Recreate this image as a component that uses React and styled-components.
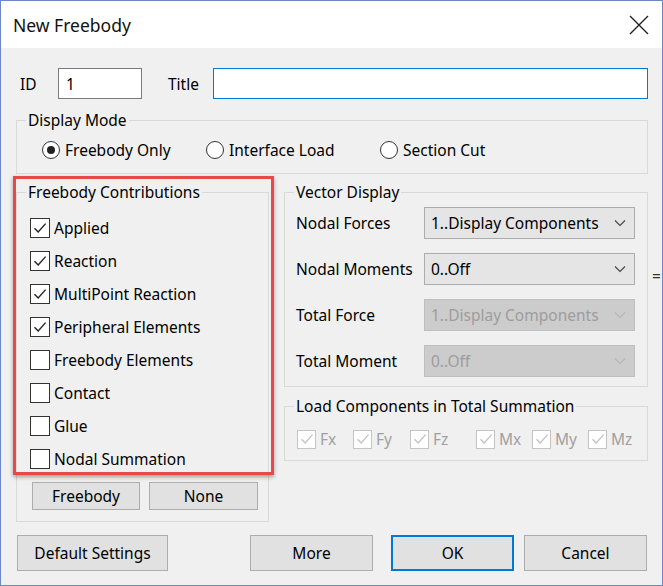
import React from "react";
import styled, { createGlobalStyle } from "styled-components";

const Global = createGlobalStyle`
  html, body { margin: 0; padding: 0; background: #ffffff; }
  body { font-family: "Noto Sans", "Open Sans", sans-serif; }
  * { box-sizing: border-box; }
`;

const Window = styled.div`
  width: 663px;
  height: 586px;
  border: 1px solid #6b87c9;
  background: #f0f0f0;
  display: flex;
  flex-direction: column;
  font-size: 15.5px;
  color: #000;
  position: relative;
`;

const TitleBar = styled.div`
  height: 47px;
  background: #ffffff;
  display: flex;
  align-items: center;
  justify-content: space-between;
  padding: 0 13px 0 12px;
  font-size: 17.5px;
  color: #111;
`;

const Body = styled.div`
  flex: 1;
  padding: 20px 14px 0 15px;
  display: flex;
  flex-direction: column;
`;

const IdRow = styled.div`
  display: flex;
  align-items: center;
  height: 31px;
`;

const Label = styled.span`
  width: ${(p) => p.$w || "auto"};
  padding-left: ${(p) => p.$pl || 0};
  flex-shrink: 0;
  white-space: nowrap;
  color: ${(p) => (p.$disabled ? "#a0a0a0" : "#000")};
`;

const TextBox = styled.div`
  height: 31px;
  width: ${(p) => p.$w || "auto"};
  flex: ${(p) => (p.$grow ? 1 : "none")};
  background: #fff;
  border: 1px solid ${(p) => (p.$focus ? "#0078d7" : "#7a7a7a")};
  display: flex;
  align-items: center;
  padding-left: 7px;
`;

const Group = styled.fieldset`
  margin: ${(p) => p.$m || 0};
  padding: 0;
  border: 1px solid #d9d9d9;
  min-width: 0;
  width: ${(p) => p.$w || "auto"};
`;

const Legend = styled.legend`
  margin-left: 9px;
  padding: 0 2px;
  line-height: 20px;
`;

const GroupBody = styled.div`
  padding: ${(p) => p.$pad};
  display: flex;
  flex-direction: ${(p) => p.$dir || "column"};
`;

const RadioItem = styled.label`
  display: flex;
  align-items: center;
  height: 24px;
  width: ${(p) => p.$w || "auto"};
  gap: 5px;
`;

const RadioCircle = styled.span`
  width: 18px;
  height: 18px;
  border-radius: 50%;
  border: 1px solid #333;
  background: #fff;
  display: flex;
  align-items: center;
  justify-content: center;
  &::after {
    content: "";
    width: 8px;
    height: 8px;
    border-radius: 50%;
    background: ${(p) => (p.$on ? "#222" : "transparent")};
  }
`;

const CheckRow = styled.label`
  display: flex;
  align-items: center;
  height: ${(p) => p.$h || "33px"};
  width: ${(p) => p.$w || "auto"};
  gap: 4px;
  color: ${(p) => (p.$disabled ? "#a0a0a0" : "#000")};
`;

const Box = styled.span`
  width: ${(p) => p.$size || "20px"};
  height: ${(p) => p.$size || "20px"};
  border: 1px solid ${(p) => (p.$disabled ? "#c4c4c4" : "#333")};
  background: #fff;
  display: flex;
  align-items: center;
  justify-content: center;
  flex-shrink: 0;
`;

const Columns = styled.div`
  display: flex;
  gap: 15px;
  margin-top: 8px;
`;

const RightCol = styled.div`
  flex: 1;
  display: flex;
  flex-direction: column;
`;

const SmallButtons = styled.div`
  display: flex;
  gap: 9px;
  margin: 7px 0 0 2px;
`;

const Button = styled.button`
  font-family: inherit;
  font-size: 15.5px;
  color: #000;
  height: ${(p) => p.$h || "36px"};
  width: ${(p) => p.$w};
  margin-left: ${(p) => p.$ml || 0};
  background: #e1e1e1;
  border: ${(p) => (p.$default ? "2px solid #0078d7" : "1px solid #adadad")};
  padding: 0;
  flex-shrink: 0;
`;

const FieldRow = styled.div`
  display: flex;
  align-items: center;
  height: 31px;
  margin-top: ${(p) => p.$mt || 0};
`;

const Select = styled.div`
  width: 211px;
  height: 32px;
  background: ${(p) => (p.$disabled ? "#cccccc" : "#e5e5e5")};
  border: 1px solid ${(p) => (p.$disabled ? "#bfbfbf" : "#acacac")};
  color: ${(p) => (p.$disabled ? "#9d9d9d" : "#000")};
  display: flex;
  align-items: center;
  justify-content: space-between;
  padding: 0 8px 0 6px;
`;

const ComponentRow = styled.div`
  display: flex;
  align-items: center;
  height: 22px;
`;

const Footer = styled.div`
  display: flex;
  margin-top: 13px;
  padding-right: 1px;
`;

const Spacer = styled.div`
  flex: 1;
`;

const Highlight = styled.div`
  position: absolute;
  left: 12px;
  top: 175px;
  width: 261px;
  height: 299px;
  border: 3px solid #e84848;
  box-shadow: 0 2px 4px rgba(0, 0, 0, 0.35);
  pointer-events: none;
`;

const Stray = styled.span`
  position: absolute;
  left: 651px;
  top: 264px;
  color: #333;
`;

const Check = ({ disabled }) => (
  <svg width="16" height="16" viewBox="0 0 16 16">
    <path
      d="M2.5 8.2 L6.2 12 L13.6 3.6"
      fill="none"
      stroke={disabled ? "#c4c4c4" : "#222"}
      strokeWidth="1.4"
    />
  </svg>
);

const Chevron = ({ disabled }) => (
  <svg width="12" height="8" viewBox="0 0 12 8">
    <path
      d="M1 1.5 L6 6.5 L11 1.5"
      fill="none"
      stroke={disabled ? "#b5b5b5" : "#444"}
      strokeWidth="1.1"
    />
  </svg>
);

const CloseIcon = () => (
  <svg width="20" height="20" viewBox="0 0 20 20">
    <path d="M1 1 L19 19 M19 1 L1 19" stroke="#222" strokeWidth="1.4" />
  </svg>
);

const contributions = [
  ["Applied", true],
  ["Reaction", true],
  ["MultiPoint Reaction", true],
  ["Peripheral Elements", true],
  ["Freebody Elements", false],
  ["Contact", false],
  ["Glue", false],
  ["Nodal Summation", false],
];

const vectors = [
  ["Nodal Forces", "1..Display Components", false],
  ["Nodal Moments", "0..Off", false],
  ["Total Force", "1..Display Components", true],
  ["Total Moment", "0..Off", true],
];

const components = [
  ["Fx", "56px"],
  ["Fy", "57px"],
  ["Fz", "66px"],
  ["Mx", "56px"],
  ["My", "56px"],
  ["Mz", "auto"],
];

export default function App() {
  return (
    <>
      <Global />
      <Window>
        <TitleBar>
          <span>New Freebody</span>
          <CloseIcon />
        </TitleBar>
        <Body>
          <IdRow>
            <Label $w="42px" $pl="4px">ID</Label>
            <TextBox $w="84px">1</TextBox>
            <Label $w="71px" $pl="26px">Title</Label>
            <TextBox $grow $focus />
          </IdRow>

          <Group $m="11px 0 0 0">
            <Legend>Display Mode</Legend>
            <GroupBody $dir="row" $pad="8px 0 11px 25px">
              <RadioItem $w="164px">
                <RadioCircle $on />
                Freebody Only
              </RadioItem>
              <RadioItem $w="174px">
                <RadioCircle />
                Interface Load
              </RadioItem>
              <RadioItem>
                <RadioCircle />
                Section Cut
              </RadioItem>
            </GroupBody>
          </Group>

          <Columns>
            <Group $w="253px">
              <Legend>Freebody Contributions</Legend>
              <GroupBody $pad="9px 0 11px 13px">
                {contributions.map(([name, on]) => (
                  <CheckRow key={name}>
                    <Box>{on && <Check />}</Box>
                    {name}
                  </CheckRow>
                ))}
                <SmallButtons>
                  <Button $h="28px" $w="108px">Freebody</Button>
                  <Button $h="28px" $w="109px">None</Button>
                </SmallButtons>
              </GroupBody>
            </Group>

            <RightCol>
              <Group>
                <Legend>Vector Display</Legend>
                <GroupBody $pad="5px 0 10px 11px">
                  {vectors.map(([name, value, disabled], i) => (
                    <FieldRow key={name} $mt={i ? "15px" : 0}>
                      <Label $w="128px">{name}</Label>
                      <Select $disabled={disabled}>
                        <span>{value}</span>
                        <Chevron disabled={disabled} />
                      </Select>
                    </FieldRow>
                  ))}
                </GroupBody>
              </Group>

              <Group $m="9px 0 0 0">
                <Legend>Load Components in Total Summation</Legend>
                <GroupBody $pad="12px 0 10px 12px">
                  <ComponentRow>
                    {components.map(([name, w]) => (
                      <CheckRow key={name} $h="22px" $w={w} $disabled>
                        <Box $size="19px" $disabled>
                          <Check disabled />
                        </Box>
                        {name}
                      </CheckRow>
                    ))}
                  </ComponentRow>
                </GroupBody>
              </Group>
            </RightCol>
          </Columns>

          <Footer>
            <Button $w="151px" $ml="1px">Default Settings</Button>
            <Spacer />
            <Button $w="123px">More</Button>
            <Button $w="123px" $ml="18px" $default>OK</Button>
            <Button $w="123px" $ml="10px">Cancel</Button>
          </Footer>
        </Body>
        <Highlight />
        <Stray>=</Stray>
      </Window>
    </>
  );
}
